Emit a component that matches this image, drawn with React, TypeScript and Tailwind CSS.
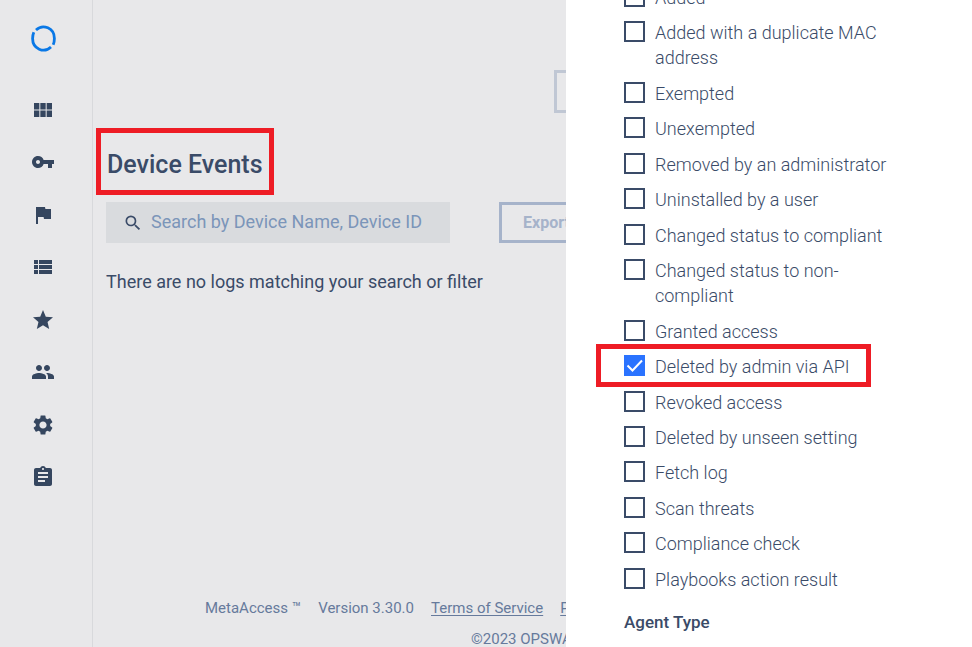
import {
  MdAssignment,
  MdFlag,
  MdPeople,
  MdSearch,
  MdSettings,
  MdStar,
  MdViewList,
  MdViewModule,
  MdVpnKey,
} from 'react-icons/md';

const navItems = [
  { label: 'Dashboard', icon: MdViewModule },
  { label: 'Access', icon: MdVpnKey },
  { label: 'Policies', icon: MdFlag },
  { label: 'Inventory', icon: MdViewList },
  { label: 'Favorites', icon: MdStar },
  { label: 'Users', icon: MdPeople },
  { label: 'Settings', icon: MdSettings },
  { label: 'Logs', icon: MdAssignment },
];

const eventTypes = [
  { label: 'Added' },
  { label: 'Added with a duplicate MAC address' },
  { label: 'Exempted' },
  { label: 'Unexempted' },
  { label: 'Removed by an administrator' },
  { label: 'Uninstalled by a user' },
  { label: 'Changed status to compliant' },
  { label: 'Changed status to non-compliant' },
  { label: 'Granted access' },
  { label: 'Deleted by admin via API', checked: true, highlighted: true },
  { label: 'Revoked access' },
  { label: 'Deleted by unseen setting' },
  { label: 'Fetch log' },
  { label: 'Scan threats' },
  { label: 'Compliance check' },
  { label: 'Playbooks action result' },
];

function Sidebar() {
  return (
    <aside className="flex w-[93px] shrink-0 flex-col items-center border-r border-[#d8d9dc] pr-[6px] pt-[25px]">
      <a href="#" aria-label="Home">
        <svg width="26" height="27" viewBox="0 0 26 27" fill="none" stroke="#0a78e6" strokeWidth="2.8">
          <path d="M6 5C13-1.6 24.4 3 24.4 13.5C24.4 16 24 18 23.2 19.8" />
          <path d="M21 22C14 28.6 2.6 24 2.6 13.5C2.6 11 3 9 3.8 7.2" />
        </svg>
      </a>
      <nav className="mt-[46px] flex h-[391px] flex-col justify-between">
        {navItems.map(({ label, icon: Icon }) => (
          <button key={label} type="button" aria-label={label} className="text-[#35465f]">
            <Icon className="h-6 w-6" />
          </button>
        ))}
      </nav>
    </aside>
  );
}

function Footer() {
  return (
    <footer className="mt-auto whitespace-nowrap text-[15px] leading-[31px] text-[#667a9c]">
      <div className="ml-[109px] flex gap-[17px]">
        <span>MetaAccess ™</span>
        <span>Version 3.30.0</span>
        <a href="#" className="underline underline-offset-2">Terms of Service</a>
        <a href="#" className="underline underline-offset-2">Privacy Policy</a>
      </div>
      <p className="-mb-2 ml-[375px]">©2023 OPSWAT Inc.</p>
    </footer>
  );
}

function FilterDrawer() {
  return (
    <aside className="flex w-[406px] shrink-0 flex-col bg-white pl-[58px] pr-[72px] text-[#3a4b68]">
      <ul className="-mt-[15px] flex flex-1 flex-col justify-between">
        {eventTypes.map((item) => (
          <li key={item.label} className="relative">
            <label className="flex items-start gap-[10px] text-lg font-light leading-[25px]">
              <input
                type="checkbox"
                defaultChecked={item.checked}
                className="peer mt-px h-[21px] w-[21px] shrink-0 appearance-none border-2 border-[#3a4b68] bg-white checked:border-[#2a73ff] checked:bg-[#2a73ff]"
              />
              <svg
                viewBox="0 0 21 21"
                className="pointer-events-none absolute left-0 top-px hidden h-[21px] w-[21px] peer-checked:block"
                fill="none"
                stroke="white"
                strokeWidth="2"
              >
                <path d="M3.5 10.5l5 5 9.5-10" />
              </svg>
              <span>{item.label}</span>
            </label>
            {item.highlighted && (
              <div className="pointer-events-none absolute -left-[28px] -top-[10px] right-[29px] h-[43px] border-[5px] border-[#ee1c25]" />
            )}
          </li>
        ))}
      </ul>
      <h2 className="mb-[13px] mt-[18px] text-[17px] font-medium leading-6">Agent Type</h2>
    </aside>
  );
}

export default function App() {
  return (
    <div className="flex h-screen overflow-hidden bg-[#e8e8ea] font-[Roboto,sans-serif] text-[#3a4b68]">
      <Sidebar />
      <main className="flex min-w-0 flex-1 flex-col overflow-hidden pl-[3px] pt-[70px]">
        <button
          type="button"
          aria-label="Filters"
          className="ml-[458px] h-[43px] w-[120px] shrink-0 border-[3px] border-[#c0c7d4]"
        />
        <h1 className="mt-[15px] self-start whitespace-nowrap border-[5px] border-[#ee1c25] px-[6px] pb-[9px] pt-[15px] text-[25px] font-medium leading-[33px]">
          Device Events
        </h1>
        <div className="ml-[10px] mt-[7px] flex gap-[49px]">
          <label className="flex h-[41px] w-[344px] shrink-0 items-center gap-2 bg-[#d9dbde] pl-[17px]">
            <MdSearch className="h-5 w-5 shrink-0" />
            <input
              type="text"
              aria-label="Search"
              placeholder="Search by Device Name, Device ID"
              className="min-w-0 flex-1 bg-transparent pb-0.5 text-lg leading-6 outline-none placeholder:text-[#7b95b9]"
            />
          </label>
          <button
            type="button"
            className="h-[41px] w-[120px] shrink-0 border-[3px] border-[#a6b3ca] pl-[21px] text-left text-base font-bold text-[#a6b3ca]"
          >
            Export
          </button>
        </div>
        <p className="ml-[10px] mt-[27px] whitespace-nowrap text-lg leading-6">
          There are no logs matching your search or filter
        </p>
        <Footer />
      </main>
      <FilterDrawer />
    </div>
  );
}
